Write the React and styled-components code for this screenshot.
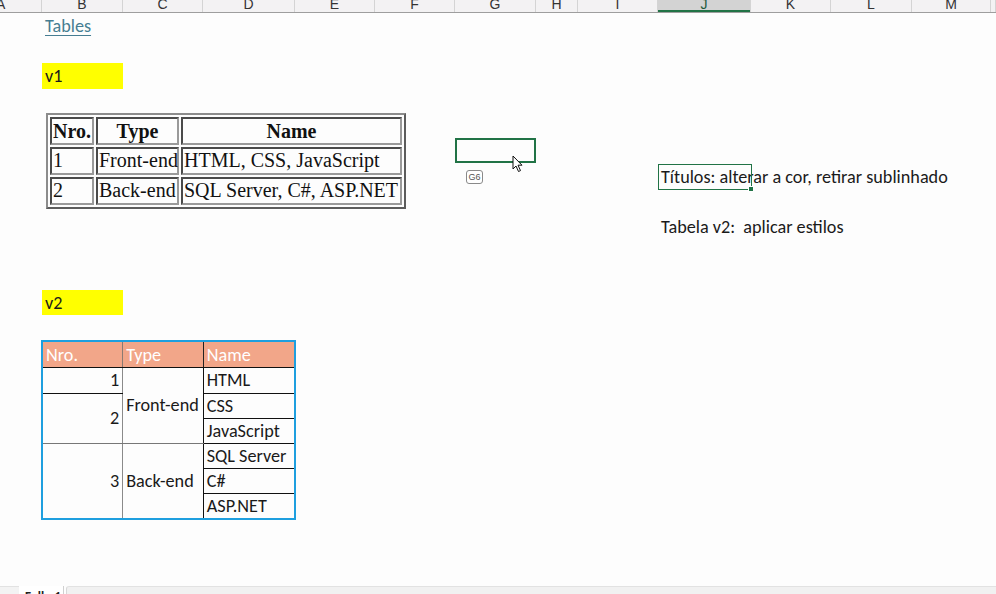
import React from 'react'
import styled, {createGlobalStyle} from 'styled-components'

const COLS = '42px 81px 80px 92px 80px 80px 81px 42px 80px 93px 80px 81px 79px 1fr'
const LETTERS = ['A', 'B', 'C', 'D', 'E', 'F', 'G', 'H', 'I', 'J', 'K', 'L', 'M', '']
const green = '#217346'
const sheetFont = `Carlito, Calibri, Lato, "Liberation Sans", sans-serif`

const Global = createGlobalStyle`
  html, body {
    margin: 0;
    padding: 0;
    background: #fdfdfd;
    overflow: hidden;
  }
`

const Window = styled.div`
  width: 996px;
  height: 594px;
  display: flex;
  flex-direction: column;
  background: #fdfdfd;
  font-family: ${sheetFont};
  color: #1a1a1a;
`

const ColumnHeader = styled.div`
  display: grid;
  grid-template-columns: ${COLS};
  height: 12px;
  border-bottom: 1px solid #9e9e9e;
  background: #f3f2f3;
  overflow: hidden;
`

const HeaderCell = styled.div`
  display: flex;
  align-items: flex-end;
  justify-content: ${p => (p.$edge ? 'flex-start' : 'center')};
  margin-left: ${p => (p.$edge ? '-4px' : '0')};
  border-right: 1px solid #d4d4d4;
  background: ${p => (p.$active ? '#d3d3d3' : 'transparent')};
  box-shadow: ${p => (p.$active ? `inset 0 -2px 0 ${green}` : 'none')};
  font-family: "Liberation Sans", Arial, sans-serif;
  font-size: 14px;
  line-height: 12px;
  color: ${p => (p.$active ? '#1e5b3b' : '#333')};
  span {
    transform: translateY(-2px);
  }
`

const Sheet = styled.div`
  flex: 1;
  display: grid;
  grid-template-columns: ${COLS};
  grid-template-rows: repeat(22, 25.2px);
  align-content: start;
`

const Cell = styled.div`
  grid-column: ${p => p.$col};
  grid-row: ${p => p.$row};
  display: flex;
  align-items: center;
  padding: 0 3px;
  font-size: 18.2px;
  line-height: 22px;
  white-space: nowrap;
  background: ${p => (p.$fill ? '#ffff00' : 'transparent')};
  position: relative;
`

const Link = styled.a`
  color: #467d92;
  text-decoration: underline;
  text-decoration-thickness: 1px;
  text-underline-offset: 3px;
  margin-top: 1px;
`

const Selected = styled.div`
  grid-column: ${p => p.$col};
  grid-row: ${p => p.$row};
  border: 2px solid ${green};
  margin: -1px 0 1px 0;
  position: relative;
`

const NameBox = styled.div`
  position: absolute;
  left: 9px;
  top: 30px;
  width: 15px;
  height: 12px;
  border: 1px solid #8a8a8a;
  border-radius: 3px;
  font-family: "Liberation Sans", sans-serif;
  font-size: 9px;
  line-height: 12px;
  text-align: center;
  color: #555;
  background: #fff;
`

const Pointer = styled.svg`
  position: absolute;
  left: 55px;
  top: 15px;
`

const Outlined = styled.div`
  &::after {
    content: '';
    position: absolute;
    left: 0;
    top: 0;
    width: 92px;
    height: 24px;
    border: 1px solid ${green};
  }
  &::before {
    content: '';
    position: absolute;
    left: 90px;
    top: 22px;
    width: 4px;
    height: 4px;
    background: ${green};
    border: 1px solid #fff;
    z-index: 1;
  }
`

/* v1: plain html table picture */
const PlainTable = styled.table`
  grid-column: 2 / span 4;
  grid-row: 5 / span 4;
  align-self: start;
  margin: -1px 0 0 4px;
  border: 2px solid #8c8c8c;
  border-right-color: #5c5c5c;
  border-bottom-color: #5c5c5c;
  border-spacing: 2px;
  table-layout: fixed;
  width: 360px;
  font-family: "Liberation Serif", "Times New Roman", serif;
  font-size: 20px;
  color: #111;
`

const PlainTh = styled.th`
  border: 2px solid #4a4a4a;
  border-right-color: #9a9a9a;
  border-bottom-color: #9a9a9a;
  height: 26px;
  padding: 0;
  font-weight: bold;
  text-align: center;
  line-height: 24px;
  width: ${p => p.$w}px;
  box-sizing: border-box;
`

const PlainTd = styled.td`
  border: 2px solid #4a4a4a;
  border-right-color: #9a9a9a;
  border-bottom-color: #9a9a9a;
  height: 24px;
  padding: 0 1px;
  line-height: 23px;
  white-space: nowrap;
`

/* v2: excel styled table */
const StyledTable = styled.table`
  grid-column: 2 / span 3;
  grid-row: 14 / span 8;
  align-self: start;
  margin: 0 0 0 -1px;
  border-collapse: collapse;
  border: 2px solid #1e9fdf;
  table-layout: fixed;
  width: 255px;
  font-size: 18.2px;
  line-height: 22px;
  color: #1a1a1a;
`

const HeadCell = styled.th`
  background: #f2a689;
  color: #fff;
  font-weight: normal;
  text-align: left;
  height: 26px;
  padding: 0 3px;
  border-bottom: 1px solid #111;
  border-left: 1px solid ${p => (p.$dark ? '#222' : '#8a7a72')};
  width: ${p => p.$w}px;
  box-sizing: border-box;
`

const Td = styled.td`
  height: ${p => p.$h || 24}px;
  padding: 0 3px;
  text-align: ${p => (p.$right ? 'right' : 'left')};
  border-bottom: 1px solid ${p => p.$line || 'transparent'};
  border-left: 1px solid ${p => p.$left || 'transparent'};
  white-space: nowrap;
`

const TabBar = styled.div`
  height: 8px;
  display: flex;
  align-items: flex-start;
  overflow: hidden;
  background: #fdfdfd;
`

const TabGap = styled.div`
  width: 19px;
  height: 100%;
  border-top: 1px solid #e2e2e2;
  background: #f3f3f3;
`

const SheetTab = styled.div`
  width: 45px;
  height: 24px;
  background: #fff;
  border-right: 1px solid #d0d0d0;
  font-size: 13px;
  font-weight: bold;
  padding: 3px 0 0 6px;
  box-sizing: border-box;
  color: #222;
`

const Scroller = styled.div`
  flex: 1;
  height: 100%;
  margin-left: 2px;
  border-top: 1px solid #e2e2e2;
  border-left: 1px solid #d8d8d8;
  border-radius: 3px 0 0 0;
  background: #f1f1f1;
`

const App = () => (
  <Window>
    <Global />
    <ColumnHeader>
      {LETTERS.map((l, i) => (
        <HeaderCell key={i} $edge={i === 0} $active={l === 'J'}>
          <span>{l}</span>
        </HeaderCell>
      ))}
    </ColumnHeader>
    <Sheet>
      <Cell $col={2} $row={1}>
        <Link>Tables</Link>
      </Cell>
      <Cell $col={2} $row={3} $fill>v1</Cell>

      <PlainTable>
        <thead>
          <tr>
            <PlainTh $w={44}>Nro.</PlainTh>
            <PlainTh $w={83}>Type</PlainTh>
            <PlainTh $w={221}>Name</PlainTh>
          </tr>
        </thead>
        <tbody>
          <tr>
            <PlainTd>1</PlainTd>
            <PlainTd>Front-end</PlainTd>
            <PlainTd>HTML, CSS, JavaScript</PlainTd>
          </tr>
          <tr>
            <PlainTd>2</PlainTd>
            <PlainTd>Back-end</PlainTd>
            <PlainTd>SQL Server, C#, ASP.NET</PlainTd>
          </tr>
        </tbody>
      </PlainTable>

      <Selected $col={7} $row={6}>
        <Pointer width="12" height="18" viewBox="0 0 12 18">
          <path d="M1 1 L1 14 L4 11 L6.5 16.5 L8.5 15.6 L6 10.2 L10 10.2 Z" fill="#fff" stroke="#111" strokeWidth="1" strokeLinejoin="round" />
        </Pointer>
        <NameBox>G6</NameBox>
      </Selected>

      <Cell $col={10} $row={7} as={Outlined}>
        <span>Títulos: alterar a cor, retirar sublinhado</span>
      </Cell>
      <Cell $col={10} $row={9}>Tabela v2:&nbsp; aplicar estilos</Cell>

      <Cell $col={2} $row={12} $fill>v2</Cell>

      <StyledTable>
        <thead>
          <tr>
            <HeadCell $w={80}>Nro.</HeadCell>
            <HeadCell $w={80}>Type</HeadCell>
            <HeadCell $w={91} $dark>Name</HeadCell>
          </tr>
        </thead>
        <tbody>
          <tr>
            <Td $right $h={25} $line="#111">1</Td>
            <Td rowSpan={3} $left="#8a8a8a" $line="#777">Front-end</Td>
            <Td $h={25} $left="#111" $line="#111">HTML</Td>
          </tr>
          <tr>
            <Td $right rowSpan={2} $line="#777">2</Td>
            <Td $left="#111" $line="#111">CSS</Td>
          </tr>
          <tr>
            <Td $left="#111" $line="#111">JavaScript</Td>
          </tr>
          <tr>
            <Td $right rowSpan={3}>3</Td>
            <Td rowSpan={3} $left="#8a8a8a">Back-end</Td>
            <Td $left="#111" $line="#111">SQL Server</Td>
          </tr>
          <tr>
            <Td $left="#111" $line="#111">C#</Td>
          </tr>
          <tr>
            <Td $left="#111">ASP.NET</Td>
          </tr>
        </tbody>
      </StyledTable>
    </Sheet>
    <TabBar>
      <TabGap />
      <SheetTab>Folha1</SheetTab>
      <Scroller />
    </TabBar>
  </Window>
)

export default App
